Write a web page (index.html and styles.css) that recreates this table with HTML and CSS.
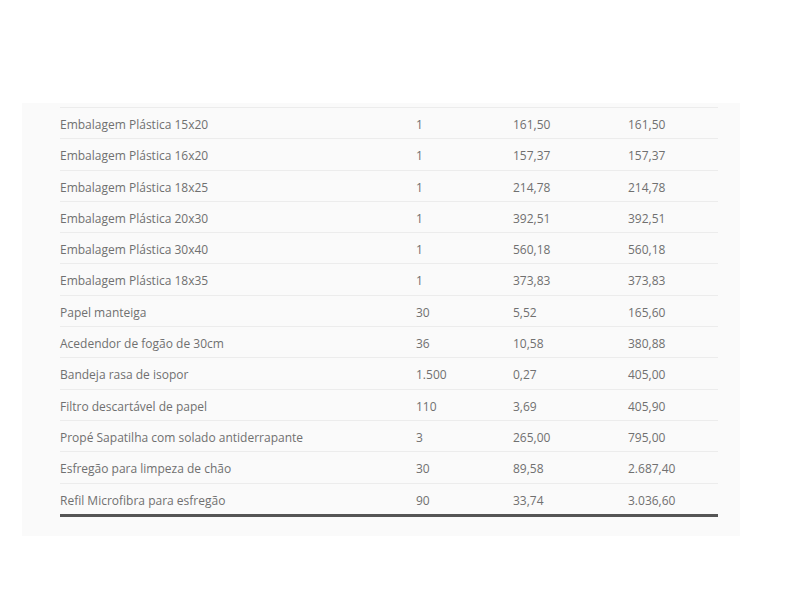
FILE: index.html
```html
<!DOCTYPE html>
<html lang="pt">
<head>
<meta charset="utf-8">
<link rel="stylesheet" href="styles.css">
</head>
<body>
<div class="panel">
  <table class="items">
    <tbody>
      <tr><td class="c-name">Embalagem Plástica 15x20</td><td class="c-qty">1</td><td class="c-price">161,50</td><td class="c-total">161,50</td></tr>
      <tr><td class="c-name">Embalagem Plástica 16x20</td><td class="c-qty">1</td><td class="c-price">157,37</td><td class="c-total">157,37</td></tr>
      <tr><td class="c-name">Embalagem Plástica 18x25</td><td class="c-qty">1</td><td class="c-price">214,78</td><td class="c-total">214,78</td></tr>
      <tr><td class="c-name">Embalagem Plástica 20x30</td><td class="c-qty">1</td><td class="c-price">392,51</td><td class="c-total">392,51</td></tr>
      <tr><td class="c-name">Embalagem Plástica 30x40</td><td class="c-qty">1</td><td class="c-price">560,18</td><td class="c-total">560,18</td></tr>
      <tr><td class="c-name">Embalagem Plástica 18x35</td><td class="c-qty">1</td><td class="c-price">373,83</td><td class="c-total">373,83</td></tr>
      <tr><td class="c-name">Papel manteiga</td><td class="c-qty">30</td><td class="c-price">5,52</td><td class="c-total">165,60</td></tr>
      <tr><td class="c-name">Acedendor de fogão de 30cm</td><td class="c-qty">36</td><td class="c-price">10,58</td><td class="c-total">380,88</td></tr>
      <tr><td class="c-name">Bandeja rasa de isopor</td><td class="c-qty">1.500</td><td class="c-price">0,27</td><td class="c-total">405,00</td></tr>
      <tr><td class="c-name">Filtro descartável de papel</td><td class="c-qty">110</td><td class="c-price">3,69</td><td class="c-total">405,90</td></tr>
      <tr><td class="c-name">Propé Sapatilha com solado antiderrapante</td><td class="c-qty">3</td><td class="c-price">265,00</td><td class="c-total">795,00</td></tr>
      <tr><td class="c-name">Esfregão para limpeza de chão</td><td class="c-qty">30</td><td class="c-price">89,58</td><td class="c-total">2.687,40</td></tr>
      <tr><td class="c-name">Refil Microfibra para esfregão</td><td class="c-qty">90</td><td class="c-price">33,74</td><td class="c-total">3.036,60</td></tr>
    </tbody>
  </table>
</div>
</body>
</html>
```
FILE: styles.css
```css
html, body {
  margin: 0;
  padding: 0;
  background: #ffffff;
}

body {
  font-family: "Open Sans", "Liberation Sans", sans-serif;
  font-size: 12px;
  color: #707070;
}

.panel {
  margin: 103px 0 0 22px;
  width: 718px;
  box-sizing: border-box;
  padding: 4px 22px 19px 38px;
  background: #fafafa;
}

.items {
  width: 658px;
  border-collapse: collapse;
  table-layout: fixed;
  border-bottom: 3px solid #555555;
}

.items td {
  padding: 9px 0 5px;
  border-top: 1px solid #ececec;
  vertical-align: middle;
  white-space: nowrap;
  line-height: 16.3px;
}

.c-name { width: 356px; }
.c-qty { width: 97px; }
.c-price { width: 115px; }
.c-total { width: 90px; }
```
